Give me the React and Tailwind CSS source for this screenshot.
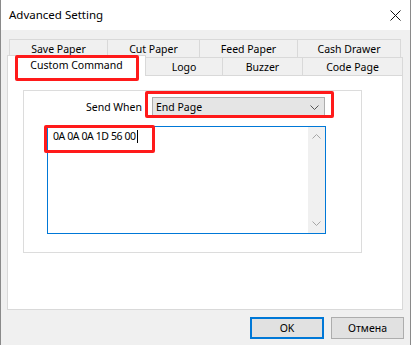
import React from 'react'

const font = { fontFamily: '"Noto Sans", "Open Sans", sans-serif' }

function Tab({ label, w, last }) {
  return (
    <div
      className={`${w} h-full flex items-center justify-center pt-[1px] border-t border-l border-[#d9d9d9] bg-[#f0f0f0] text-black ${last ? 'border-r' : ''}`}
    >
      {label}
    </div>
  )
}

function Chevron({ className, up }) {
  return (
    <svg width="9" height="5" viewBox="0 0 9 5" className={className}>
      <path
        d={up ? 'M0.5 4.5 L4.5 0.5 L8.5 4.5' : 'M0.5 0.5 L4.5 4.5 L8.5 0.5'}
        fill="none"
        stroke="currentColor"
        strokeWidth="1"
      />
    </svg>
  )
}

export default function App() {
  return (
    <div
      className="relative w-[411px] h-[345px] flex flex-col border-l border-r border-[#8a8a8a] bg-[#f0f0f0] text-[10.5px] leading-none text-black"
      style={font}
    >
      {/* title bar */}
      <div className="h-[30px] bg-white flex items-center justify-between pl-[8px] pr-[9px]">
        <span className="text-[11.5px]">Advanced Setting</span>
        <svg width="11" height="11" viewBox="0 0 11 11">
          <path d="M0.5 0.5 L10.5 10.5 M10.5 0.5 L0.5 10.5" stroke="#111" strokeWidth="1" />
        </svg>
      </div>

      <div className="pt-[9px] flex flex-col">
        {/* tabs, back row */}
        <div className="flex ml-[8px] h-[18px]">
          <Tab label="Save Paper" w="w-[98px]" />
          <Tab label="Cut Paper" w="w-[92px]" />
          <Tab label="Feed Paper" w="w-[98px]" />
          <Tab label="Cash Drawer" w="w-[104px]" last />
        </div>
        {/* tabs, front row */}
        <div className="flex items-end ml-[6px] h-[18px]">
          <div className="relative z-10 w-[139px] h-[21px] -mb-[1px] flex justify-center pt-[4px] bg-white border-t border-l border-r border-[#d9d9d9]">
            Custom Command
          </div>
          <div className="w-[77px] h-full flex items-center justify-center pt-[2px] border-t border-r border-[#d9d9d9]">Logo</div>
          <div className="w-[80px] h-full flex items-center justify-center pt-[2px] border-t border-r border-[#d9d9d9]">Buzzer</div>
          <div className="w-[100px] h-full flex items-center justify-center pt-[2px] border-t border-r border-[#d9d9d9]">Code Page</div>
        </div>

        {/* panel */}
        <div className="ml-[6px] w-[396px] h-[235px] border border-[#d9d9d9] bg-white pl-[15px] pt-[14px]">
          <div className="w-[339px] h-[163px] border border-[#dcdcdc] pt-[6px]">
            <div className="flex items-center">
              <span className="w-[118px] text-right">Send When</span>
              <div className="ml-[10px] w-[173px] h-[20px] flex items-center justify-between pl-[3px] pr-[5px] bg-[#e5e5e5] border border-[#adadad]">
                <span>End Page</span>
                <Chevron className="text-[#555]" />
              </div>
            </div>
            <div className="ml-[23px] mt-[9px] w-[279px] h-[108px] border border-[#0078d7] flex">
              <div className="flex-1 pl-[5px] pt-[4px] flex items-start">
                <span className="tracking-[-0.4px]">0A 0A 0A 1D 56 00</span>
                <span className="w-px h-[13px] bg-black -mt-[1px] ml-[1px]" />
              </div>
              <div className="w-[17px] h-full bg-[#f0f0f0] flex flex-col items-center justify-between py-[7px]">
                <Chevron up className="text-[#a6a6a6]" />
                <Chevron className="text-[#a6a6a6]" />
              </div>
            </div>
          </div>
        </div>

        {/* buttons */}
        <div className="flex justify-end gap-[7px] mt-[7px] pr-[6px]">
          <button className="w-[74px] h-[22px] flex items-center justify-center bg-[#e1e1e1] border-2 border-[#0078d7]">
            OK
          </button>
          <button className="w-[73px] h-[22px] flex items-center justify-center bg-[#e1e1e1] border border-[#adadad]">
            Отмена
          </button>
        </div>
      </div>

      {/* red annotation boxes */}
      <div className="absolute z-20 left-[14px] top-[55px] w-[124px] h-[26px] border-[3px] border-[#ff1a1a] rounded-[2px]" />
      <div className="absolute z-20 left-[144px] top-[91px] w-[189px] h-[27px] border-[3px] border-[#ff1a1a] rounded-[2px]" />
      <div className="absolute z-20 left-[43px] top-[125px] w-[111px] h-[28px] border-[3px] border-[#ff1a1a] rounded-[2px]" />
    </div>
  )
}
